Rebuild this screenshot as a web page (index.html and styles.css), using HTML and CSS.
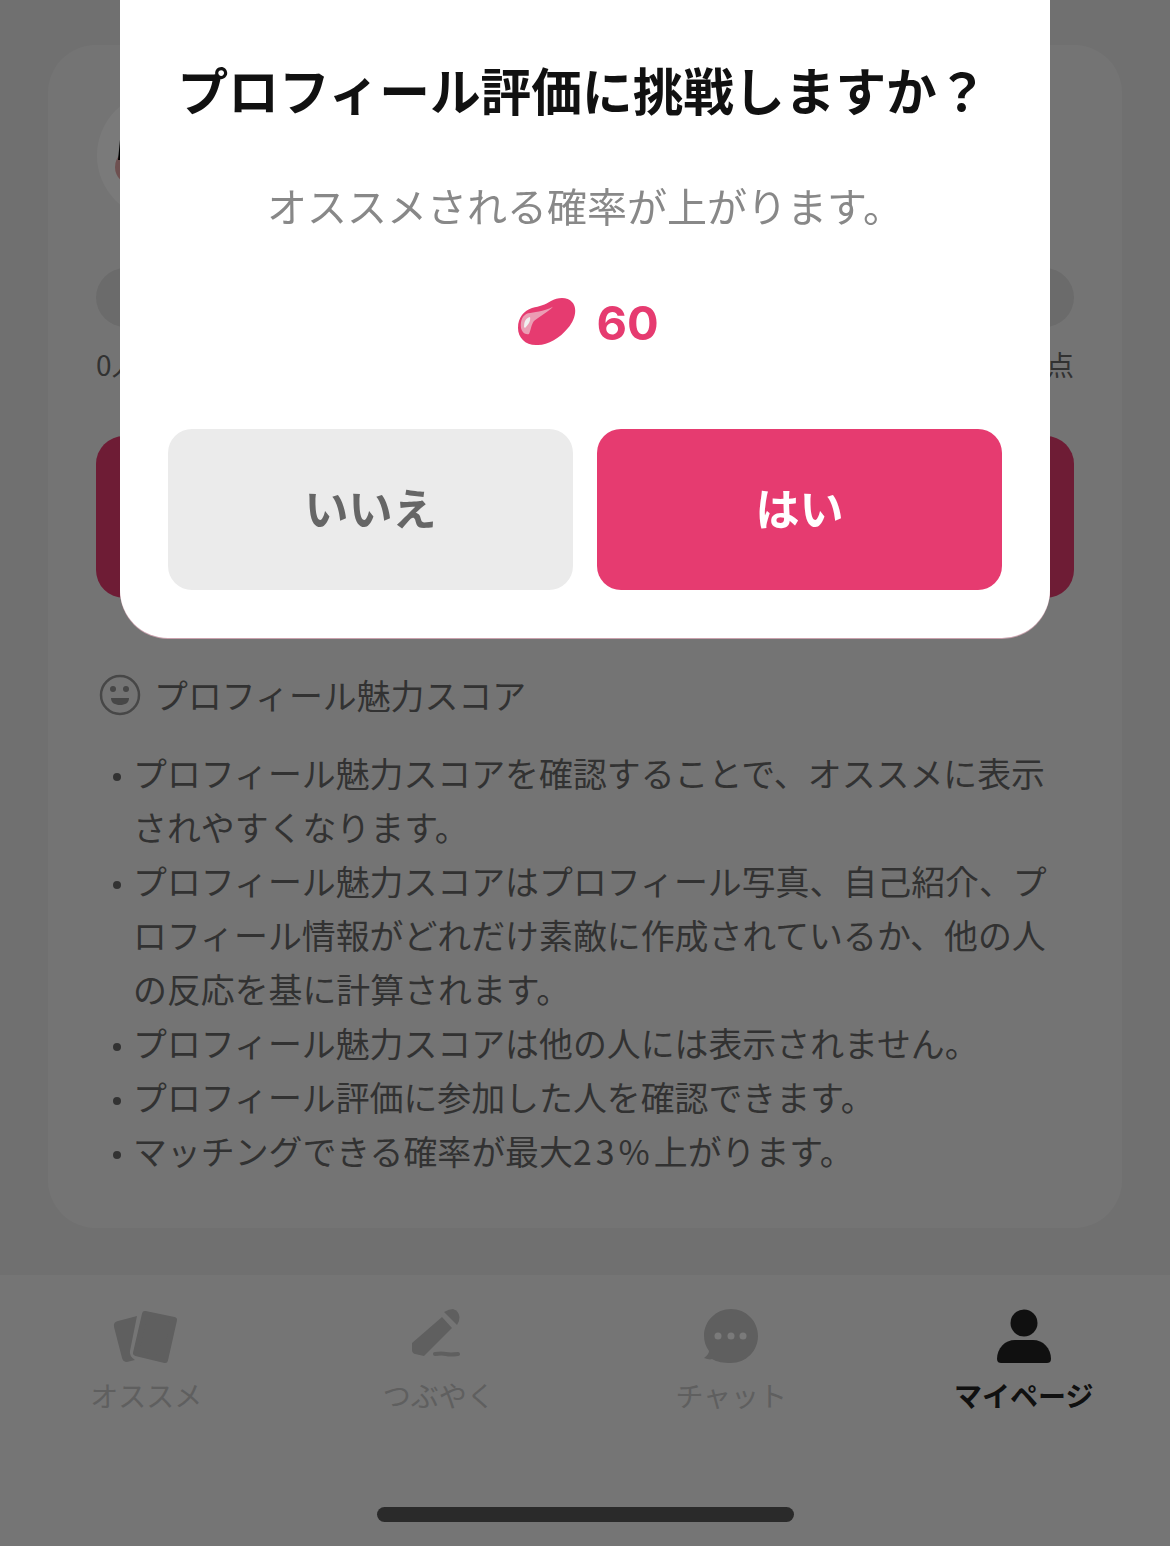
FILE: index.html
```html
<!DOCTYPE html>
<html lang="ja">
<head>
<meta charset="utf-8"/>
<title>プロフィール評価</title>
<link rel="stylesheet" href="styles.css">
</head>
<body>
<div class="page">
  <div class="card">
    <div class="avatar">
      <svg width="40" height="127" viewBox="0 0 40 127">
        <circle cx="36" cy="75" r="18" fill="#e6a8a8"/>
        <path d="M21,68 L23,48 L30,48 L30,68 Z" fill="#000"/>
      </svg>
    </div>
    <div class="track"></div>
    <div class="track-labels"><span>0人</span><span>100点</span></div>
    <div class="big-btn"></div>
    <div class="section-title">
      <svg width="42" height="42" viewBox="0 0 42 42">
        <circle cx="21" cy="21" r="19" fill="none" stroke="#949494" stroke-width="2.5"/>
        <circle cx="14" cy="15" r="3" fill="#949494"/>
        <circle cx="27" cy="15" r="3" fill="#949494"/>
        <path d="M12,24 H30 C30,29 26,31 21,31 C16,31 12,29 12,24 Z" fill="#949494"/>
      </svg>
      <span>プロフィール魅力スコア</span>
    </div>
    <ul class="notes">
      <li>プロフィール魅力スコアを確認することで、オススメに表示されやすくなります。</li>
      <li>プロフィール魅力スコアはプロフィール写真、自己紹介、プロフィール情報がどれだけ素敵に作成されているか、他の人の反応を基に計算されます。</li>
      <li>プロフィール魅力スコアは他の人には表示されません。</li>
      <li>プロフィール評価に参加した人を確認できます。</li>
      <li>マッチングできる確率が最大<span class="latin">23%</span>上がります。</li>
    </ul>
  </div>
  <div class="nav">
    <div class="nav-items">
      <div class="nav-item">
        <svg width="66" height="56" viewBox="0 0 66 56">
          <path d="M24,7 L5,12 Q0,13 1,18 L9,49 Q10,53 14,53 L22,51 Q16,47 17,42 Z"/>
          <path d="M32,5 L61,11 L52,51 L23,44 Z" stroke-width="6" stroke-linejoin="round" class="stroked"/>
        </svg>
        <span>オススメ</span>
      </div>
      <div class="nav-item">
        <svg class="pencil" width="48" height="56" viewBox="0 0 48 56">
          <path d="M30,8 L40,19 L12,47 L3,45 Q0,44 0,41 L0,34 Z"/>
          <path d="M32,3 Q37,0 41,0 Q47,2 47.5,8 L47,12 L45,16 Z"/>
          <path d="M23,45 Q30,44 34,45 T46,45" fill="none" stroke-width="4" stroke-linecap="round" class="line"/>
        </svg>
        <span>つぶやく</span>
      </div>
      <div class="nav-item">
        <svg width="54" height="56" viewBox="0 0 54 56">
          <path d="M27,0 C42,0 54,12 54,27 C54,42 42,54 27,54 C19,54 13,53 8,50 C6,51 3,50 0,49 C3,47 5,44 5,42 C2,38 0,33 0,27 C0,12 12,0 27,0 Z"/>
          <circle cx="14" cy="27" r="3.5" class="dot"/>
          <circle cx="27" cy="27" r="3.5" class="dot"/>
          <circle cx="39" cy="27" r="3.5" class="dot"/>
        </svg>
        <span>チャット</span>
      </div>
      <div class="nav-item active">
        <svg width="54" height="56" viewBox="0 0 54 56">
          <circle cx="27" cy="14" r="13.5"/>
          <path d="M18,31 H36 C46,31 54,39 54,50 C54,53 52,54 50,54 H4 C2,54 0,53 0,50 C0,39 8,31 18,31 Z"/>
        </svg>
        <span>マイページ</span>
      </div>
    </div>
    <div class="home-bar"></div>
  </div>
</div>

<div class="overlay">
  <div class="modal">
    <div class="modal-title">プロフィール評価に挑戦しますか？</div>
    <div class="modal-sub">オススメされる確率が上がります。</div>
    <div class="price">
      <svg width="58" height="48" viewBox="0 0 58 48">
        <path d="M0,30 C0,19 6,13 14,10 C22,8 27,7 33,3 C40,-1 50,-1 54,4 C60,10 57,22 50,30 C42,40 30,47 20,47 C8,48 0,40 0,30 Z" fill="#e63b70"/>
        <path d="M3,30 C2,22 5,17 10,15.3 C16,14 25,14 35,8.7 C30,14 22,18 16,23 C13,27 13,32 11,36 C7,37 4,34 3,30 Z" fill="#eb9db4"/>
        <path d="M6,29 C6,23 8,20 12,19 C13,23 10,27 7,30 Z" fill="#f0f0f0"/>
      </svg>
      <span class="price-num">60</span>
    </div>
    <div class="modal-btns">
      <div class="btn btn-no">いいえ</div>
      <div class="btn btn-yes">はい</div>
    </div>
  </div>
</div>
</body>
</html>
```

FILE: styles.css
```css
* {
    box-sizing: border-box;
}
body {
    margin: 0;
    width: 1170px;
    height: 1546px;
    overflow: hidden;
    font-family: "Noto Sans CJK JP", "Noto Sans", sans-serif;
    background-color: #ebebeb;
}
.page {
    display: flex;
    flex-direction: column;
    height: 1546px;
    padding-top: 45px;
}
.card {
    margin: 0 48px;
    height: 1183px;
    padding: 47px 48px 0;
    background-color: #f3f3f3;
    border-radius: 48px;
    color: #6a6a6a;
}
.avatar {
    width: 127px;
    height: 127px;
    border-radius: 50%;
    background-color: #fff;
    overflow: hidden;
    margin-left: 1px;
}
.track {
    height: 59px;
    margin-top: 49px;
    border-radius: 30px;
    background-color: #dfdfdf;
}
.track-labels {
    display: flex;
    justify-content: space-between;
    margin-top: 17px;
    font-size: 28px;
    line-height: 40px;
}
.big-btn {
    height: 162px;
    margin-top: 52px;
    border-radius: 28px;
    background-color: #e63b70;
}
.section-title {
    display: flex;
    align-items: center;
    gap: 13px;
    margin-top: 70px;
    margin-left: 3px;
    font-size: 33.9px;
    line-height: 54px;
}
.notes {
    list-style: none;
    margin: 24px 0 0;
    padding: 0 0 0 37px;
    font-size: 33.9px;
    line-height: 54px;
}
.notes li {
    position: relative;
}
.notes li::before {
    content: "";
    position: absolute;
    left: -20px;
    top: 27px;
    width: 8px;
    height: 8px;
    border-radius: 50%;
    background-color: #6a6a6a;
}
.latin {
    letter-spacing: 4px;
}
.nav {
    margin-top: 47px;
    flex: 1;
    background-color: #f5f5f5;
    display: flex;
    flex-direction: column;
}
.nav-items {
    display: grid;
    grid-template-columns: repeat(4, 1fr);
    padding-top: 34px;
}
.nav-item {
    display: flex;
    flex-direction: column;
    align-items: center;
    font-size: 28px;
    line-height: 40px;
    color: #c6c6c6;
}
.nav-item svg {
    fill: #c6c6c6;
    margin-bottom: 10px;
}
.nav-item .pencil {
    margin-right: 5px;
}
.nav-item .stroked {
    stroke: #c6c6c6;
}
.nav-item .line {
    stroke: #c6c6c6;
    fill: none;
}
.nav-item .dot {
    fill: #fff;
}
.nav-item.active {
    color: #232323;
    font-weight: 700;
}
.nav-item.active svg {
    fill: #232323;
}
.home-bar {
    width: 417px;
    height: 15px;
    margin: 92px auto 0 377px;
    border-radius: 8px;
    background-color: #585858;
}
.overlay {
    position: fixed;
    top: 0;
    left: 0;
    width: 1170px;
    height: 1546px;
    background-color: rgba(0, 0, 0, 0.52);
}
.modal {
    position: absolute;
    top: 0;
    left: 120px;
    width: 930px;
    height: 638px;
    padding: 0 48px;
    background-color: #fff;
    border-radius: 0 0 48px 48px;
    box-shadow: 0 1px 0 #c9a0ac;
    text-align: center;
}
.modal-title {
    padding-top: 53px;
    padding-right: 5px;
    font-size: 50.7px;
    line-height: 72px;
    font-weight: 700;
    color: #111;
    white-space: nowrap;
}
.modal-sub {
    margin-top: 51px;
    font-size: 40px;
    line-height: 58px;
    color: #888;
}
.price {
    display: flex;
    justify-content: center;
    align-items: center;
    gap: 20px;
    margin-top: 64px;
    height: 48px;
    padding-left: 7px;
}
.price-num {
    font-family: Inter, "Liberation Sans", sans-serif;
    font-size: 47px;
    font-weight: 700;
    color: #e63b70;
}
.modal-btns {
    display: flex;
    gap: 24px;
    margin-top: 83px;
}
.btn {
    flex: 1;
    height: 161px;
    border-radius: 24px;
    font-size: 44px;
    font-weight: 700;
    line-height: 157px;
}
.btn-no {
    background-color: #ebebeb;
    color: #666;
}
.btn-yes {
    background-color: #e63b70;
    color: #fff;
}
```
